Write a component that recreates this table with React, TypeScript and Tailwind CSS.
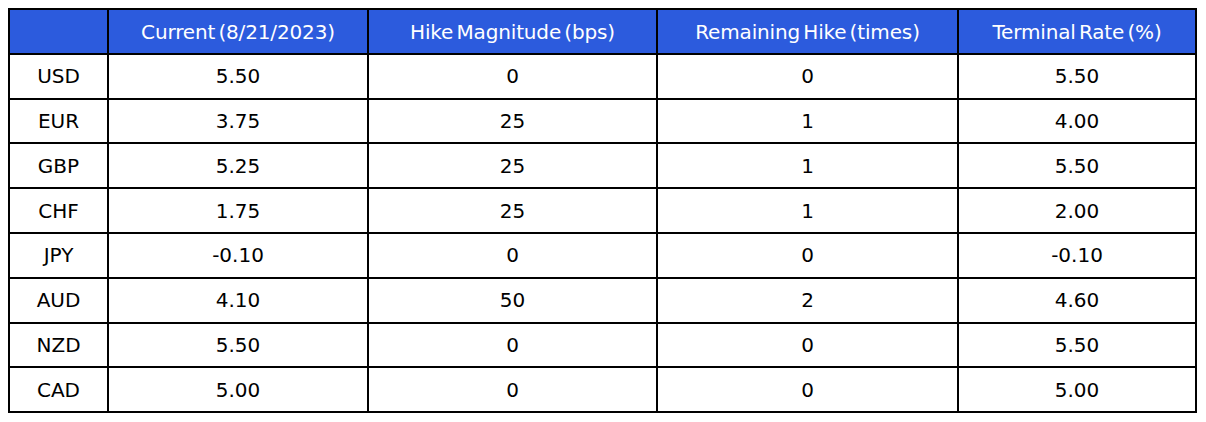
import React from "react";

const headers = ["", "Current (8/21/2023)", "Hike Magnitude (bps)", "Remaining Hike (times)", "Terminal Rate (%)"];
const rows: string[][] = [
  ["USD", "5.50", "0", "0", "5.50"],
  ["EUR", "3.75", "25", "1", "4.00"],
  ["GBP", "5.25", "25", "1", "5.50"],
  ["CHF", "1.75", "25", "1", "2.00"],
  ["JPY", "-0.10", "0", "0", "-0.10"],
  ["AUD", "4.10", "50", "2", "4.60"],
  ["NZD", "5.50", "0", "0", "5.50"],
  ["CAD", "5.00", "0", "0", "5.00"],
];
const widths = ["w-[99px]", "w-[260px]", "w-[289px]", "w-[301px]", "w-[238px]"];

export default function App() {
  return (
    <div className="w-[1206px] h-[422px] bg-white pt-[8px] pl-[8px]" style={{ fontFamily: "'DejaVu Sans', Inter, sans-serif" }}>
      <table className="border-collapse table-fixed w-[1187px]">
        <colgroup>
          {widths.map((w, i) => (
            <col key={i} className={w} />
          ))}
        </colgroup>
        <thead>
          <tr className="h-[44.8px] bg-[#2c5bdd] text-white">
            {headers.map((h, i) => (
              <th key={i} className="border-2 border-black font-normal text-center p-0 pt-[1px] text-[20px] tracking-[-0.15px] [word-spacing:-3px]">
                {h}
              </th>
            ))}
          </tr>
        </thead>
        <tbody>
          {rows.map((r, ri) => (
            <tr key={ri} className="h-[44.8px] text-black">
              {r.map((c, ci) => (
                <td key={ci} className="border-2 border-black text-center p-0 text-[20px]">
                  {c}
                </td>
              ))}
            </tr>
          ))}
        </tbody>
      </table>
    </div>
  );
}
